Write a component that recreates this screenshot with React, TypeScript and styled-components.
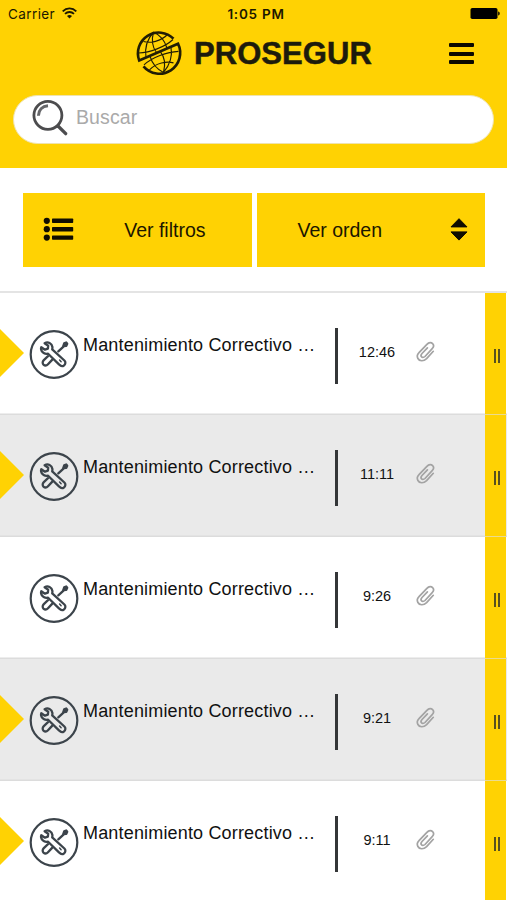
import React from "react";
import styled, { createGlobalStyle } from "styled-components";

const YELLOW = "#ffd203";

const GlobalStyle = createGlobalStyle`
  * { box-sizing: border-box; }
  body { margin: 0; background: #fff; font-family: "Liberation Sans", Arial, sans-serif; color: #111; }
  svg { display: block; flex: none; overflow: visible; }
`;

const Screen = styled.main`
  width: 507px;
  height: 900px;
  overflow: hidden;
  background: #fff;
`;

const Header = styled.header`
  height: 168px;
  background: ${YELLOW};
`;

const StatusBar = styled.div`
  display: grid;
  grid-template-columns: 1fr auto 1fr;
  align-items: center;
  height: 28px;
  padding: 0 7px 0 8px;
  font: 400 13px/28px Inter, sans-serif;
  color: #1c1800;
`;

const Carrier = styled.div`
  display: flex;
  align-items: center;
  gap: 7px;
  font-size: 13.5px;
  letter-spacing: 0.4px;
`;

const Clock = styled.div`
  font-size: 13.5px;
  font-weight: 600;
  letter-spacing: 0.75px;
  padding-left: 4px;
`;

const Battery = styled.div`
  justify-self: end;
`;

const BrandBar = styled.div`
  display: flex;
  align-items: center;
  height: 50px;
  padding: 0 33px 0 135px;
`;

const BrandName = styled.h1`
  margin: 2px 0 0 13px;
  font-size: 31px;
  line-height: 50px;
  font-weight: 700;
  letter-spacing: 0.05px;
  color: #1d1b0c;
  -webkit-text-stroke: 0.5px #1d1b0c;
`;

const MenuButton = styled.button`
  display: flex;
  flex-direction: column;
  gap: 4.5px;
  margin: 1px 0 0 auto;
  padding: 0;
  border: 0;
  background: none;
  & > span {
    width: 25px;
    height: 4px;
    border-radius: 1px;
    background: #0c0a00;
  }
`;

const SearchBox = styled.label`
  display: flex;
  align-items: center;
  height: 49px;
  margin: 17px 13px 0;
  padding: 0 18px;
  border: 1px solid #efe3ae;
  border-radius: 25px;
  background: #fff;
`;

const SearchInput = styled.input`
  flex: 1;
  margin: 0 0 5px 8px;
  padding: 0;
  border: 0;
  outline: 0;
  background: transparent;
  font: 19.5px/24px "Liberation Sans", Arial, sans-serif;
  letter-spacing: 0.1px;
  &::placeholder { color: #aaa; opacity: 1; }
`;

const Toolbar = styled.div`
  display: grid;
  grid-template-columns: 228.5px 228.5px;
  gap: 5px;
  height: 123px;
  padding: 25px 22px 24px 23px;
`;

const ToolButton = styled.button<{ $trailing?: boolean }>`
  display: flex;
  align-items: center;
  justify-content: space-between;
  height: 73.5px;
  padding: ${({ $trailing }) => ($trailing ? "0 17px 0 41px" : "0 46px 0 20px")};
  border: 0;
  background: ${YELLOW};
  color: #1b1600;
  font: 19.5px/24px "Liberation Sans", Arial, sans-serif;
`;

const List = styled.ul`
  margin: 0;
  padding: 0;
  border-top: 2px solid #e4e4e4;
  list-style: none;
`;

const Row = styled.li<{ $shaded: boolean }>`
  display: grid;
  grid-template-columns: 30px 53px 252px 3px 78px 69px 21px 1px;
  height: 122px;
  background: ${({ $shaded }) => ($shaded ? "#eaeaea" : "#fff")};
  box-shadow: inset 0 -1.5px #dcdcdc;
`;

const Marker = styled.div<{ $visible: boolean }>`
  width: 24px;
  height: 48px;
  margin-top: 36px;
  background: ${({ $visible }) => ($visible ? YELLOW : "transparent")};
  clip-path: polygon(0 0, 100% 50%, 0 100%);
`;

const IconCell = styled.div`
  padding-top: 36px;
`;

const Title = styled.div`
  padding-top: 40px;
  font-size: 18px;
  line-height: 24px;
  letter-spacing: 0.17px;
  white-space: nowrap;
`;

const Separator = styled.div`
  width: 2.5px;
  height: 56px;
  margin-top: 35px;
  background: #343638;
`;

const Time = styled.time`
  padding-top: 49px;
  font-size: 14.5px;
  line-height: 20px;
  text-align: center;
`;

const Attachment = styled.div`
  padding: 48px 0 0;
`;

const Handle = styled.div`
  display: flex;
  justify-content: center;
  gap: 2px;
  padding: 56px 0 0 3px;
  background: ${YELLOW};
  box-shadow: inset 0 -1px #eadb90;
  & > span {
    width: 2px;
    height: 14px;
    background: #575020;
  }
`;

const Wifi = () => (
  <svg width="15" height="12" viewBox="0 0.8 15 12" fill="none" stroke="#1c1800" strokeWidth="1.8">
    <path d="M.7 4.1C4.5.3 10.5.3 14.3 4.1M3 6.6c2.5-2.4 6.5-2.4 9 0" />
    <path d="M5 8.8c1.4-1.3 3.6-1.3 5 0L7.5 11.3Z" fill="#1c1800" stroke="none" />
  </svg>
);

const BatteryIcon = () => (
  <svg width="30" height="12" viewBox="0 0.5 30 12">
    <rect x=".5" y=".5" width="27" height="11" rx="1.8" />
    <path d="M28.2 4c2 .4 2 3.6 0 4Z" />
  </svg>
);

const gridHalf = "M8.5 12C15 14 26 12 32.5 5M3.5 23.5C15 23 30 17.5 38 10M18.5 2.5C12 10 9.5 19 11 28M18.5 2.5C16.5 10 17.5 18 21.5 23M18.5 2.5C26 6 30 12 32 18.5";

const Globe = () => (
  <svg width="46" height="46" viewBox="0 0.5 46 46" fill="none" stroke="#211d05">
    <path strokeWidth="2.6" d="M38.5 9.2A20.8 20.8 0 0 0 4.2 31L43 14.2A20.8 20.8 0 0 1 8.5 36.9" />
    <g strokeWidth="1.15">
      <path d={gridHalf} />
      <path d={gridHalf} transform="rotate(180 23.5 22.7)" />
    </g>
  </svg>
);

const Magnifier = () => (
  <svg width="36" height="37" viewBox="0 1.5 36 37" fill="none" stroke="#4c4c4e" strokeLinecap="round">
    <circle cx="15.9" cy="15.8" r="14" strokeWidth="2.8" />
    <path d="M6.4 16.3c.2-5.8 3.8-9.6 9.6-10.1" strokeWidth="3" strokeLinecap="butt" stroke="#66676a" />
    <path d="m26 26.5 7.7 7.7" strokeWidth="3.3" />
  </svg>
);

const ListIcon = () => (
  <svg width="31" height="25" viewBox="0 0 31 25" fill="#100d00">
    {[3.8, 12.2, 20.6].map((y) => (
      <g key={y}>
        <circle cx="3.8" cy={y} r="3.1" />
        <rect x="9" y={y - 2.2} width="21.2" height="4.4" rx=".7" />
      </g>
    ))}
  </svg>
);

const SortIcon = () => (
  <svg width="18" height="24" viewBox="0 0 18 24" fill="#100d00" stroke="#100d00" strokeLinejoin="round">
    <path d="M9 .7 17 8.9H1Z" />
    <path d="M1 13.9h16L9 22.1Z" />
  </svg>
);

const Tools = () => (
  <svg width="49" height="50" viewBox="0 0 49 50" fill="none" stroke="#3c444b" strokeLinejoin="round" strokeLinecap="round">
    <circle cx="24" cy="25.5" r="23.3" strokeWidth="2.2" />
    <g strokeWidth="2.3">
      <path d="M14.6 14.2c3.4-1.8 7.3 0 7.8 3.8.1.9 0 1.6-.2 2.3L34.4 31.5c1.5 1.5 1.2 3.6-.3 4.8-1.5 1.2-3.6.8-4.9-.7L18.1 24.7c-3.2.6-6.4-1-7-4.2-.2-1 0-1.8.2-2.3l3.6 2.5 3-1.1.3-2.9Z" />
      <path d="m18 27.2-4.2 3.9c-1.4 1.4-1.5 3.3-.3 4.5 1.3 1.2 3.2 1 4.5-.4l4.1-4.3M28.3 22.4l5.2-4.8" />
      <path d="m33.3 17.2.9-2.9 2-.8 1 1.2-.9 2.1Z" fill="#3c444b" />
      <path d="m29.6 31.1 1.5 1.6" strokeWidth="1.5" />
    </g>
  </svg>
);

const Clip = () => (
  <svg width="20" height="22" viewBox="0 0 20 22" fill="none" stroke="#a3a3a3" strokeWidth="1.7" strokeLinecap="round" strokeLinejoin="round">
    <path d="m17.3 10.3-6.7 7.3c-3.1 3.1-7.2 2.7-8.7-.1-1.1-2-.5-4.2 1.1-5.8l7.9-8.4c2.1-2.2 4.4-2 5.7-.7 1.5 1.5 1.1 3.4-.4 5l-7.2 7.9c-1.4 1.3-2.9 1.1-3.5.3-.9-1-.5-2.2.5-3.3l5.4-5.7" />
  </svg>
);

const orders = [
  { time: "12:46", pending: true },
  { time: "11:11", pending: true },
  { time: "9:26", pending: false },
  { time: "9:21", pending: true },
  { time: "9:11", pending: true },
];

export default function App() {
  return (
    <Screen>
      <GlobalStyle />
      <Header>
        <StatusBar>
          <Carrier>Carrier <Wifi /></Carrier>
          <Clock>1:05 PM</Clock>
          <Battery><BatteryIcon /></Battery>
        </StatusBar>
        <BrandBar>
          <Globe />
          <BrandName>PROSEGUR</BrandName>
          <MenuButton aria-label="Menú"><span /><span /><span /></MenuButton>
        </BrandBar>
        <SearchBox>
          <Magnifier />
          <SearchInput placeholder="Buscar" />
        </SearchBox>
      </Header>
      <Toolbar>
        <ToolButton><ListIcon />Ver filtros</ToolButton>
        <ToolButton $trailing>Ver orden<SortIcon /></ToolButton>
      </Toolbar>
      <List>
        {orders.map(({ time, pending }, index) => (
          <Row key={time} $shaded={index % 2 === 1}>
            <Marker $visible={pending} />
            <IconCell><Tools /></IconCell>
            <Title>Mantenimiento Correctivo …</Title>
            <Separator />
            <Time>{time}</Time>
            <Attachment><Clip /></Attachment>
            <Handle><span /><span /></Handle>
          </Row>
        ))}
      </List>
    </Screen>
  );
}
